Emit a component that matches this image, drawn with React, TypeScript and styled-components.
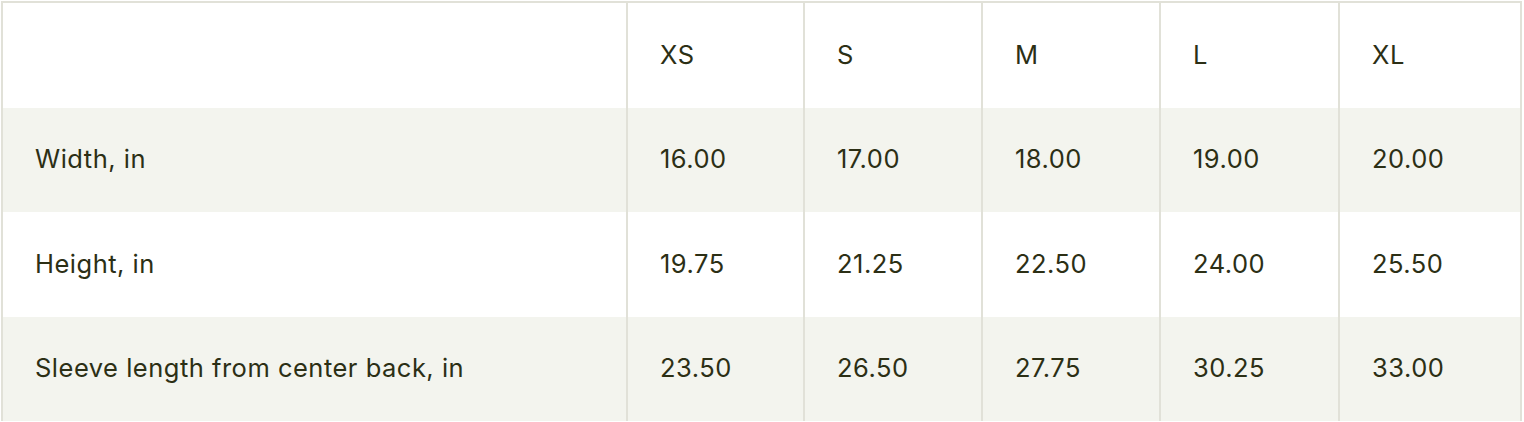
import * as React from 'react';
import styled, { createGlobalStyle } from 'styled-components';

const sizes = ['XS', 'S', 'M', 'L', 'XL'];

const rows = [
  { label: 'Width, in', values: ['16.00', '17.00', '18.00', '19.00', '20.00'] },
  { label: 'Height, in', values: ['19.75', '21.25', '22.50', '24.00', '25.50'] },
  { label: 'Sleeve length from center back, in', values: ['23.50', '26.50', '27.75', '30.25', '33.00'] },
];

const App = () => {
  return (
    <>
      <GlobalStyle />
      <Page>
        <Table>
          <Row>
            <Cell />
            {sizes.map((s) => (
              <Cell key={s} divided>{s}</Cell>
            ))}
          </Row>
          {rows.map((row, index) => (
            <Row key={row.label} striped={index % 2 === 0}>
              <Cell>{row.label}</Cell>
              {row.values.map((v, i) => (
                <Cell key={i} divided>{v}</Cell>
              ))}
            </Row>
          ))}
        </Table>
      </Page>
    </>
  );
};

export default App;

const GlobalStyle = createGlobalStyle`
  body {
    margin: 0;
    background: #ffffff;
    font-family: Inter, 'Liberation Sans', sans-serif;
  }
`;

const Page = styled.div`
  padding: 1px 0 0 1px;
`;

const Table = styled.div`
  width: 1521px;
  box-sizing: border-box;
  border: 2px solid #e1e1d8;
  border-bottom: none;
`;

const Row = styled.div<{ striped?: boolean }>`
  display: grid;
  grid-template-columns: 623px 177px 178px 178px 179px 182px;
  background: ${(p) => (p.striped ? '#f3f4ee' : '#ffffff')};
`;

const Cell = styled.div<{ divided?: boolean }>`
  box-sizing: border-box;
  height: 104.5px;
  display: flex;
  align-items: center;
  padding: 0 32px 2px;
  border-left: ${(p) => (p.divided ? '2px solid #e1e1d8' : 'none')};
  font-size: 25.5px;
  letter-spacing: 0.5px;
  color: #2c2f15;
  white-space: nowrap;
`;
